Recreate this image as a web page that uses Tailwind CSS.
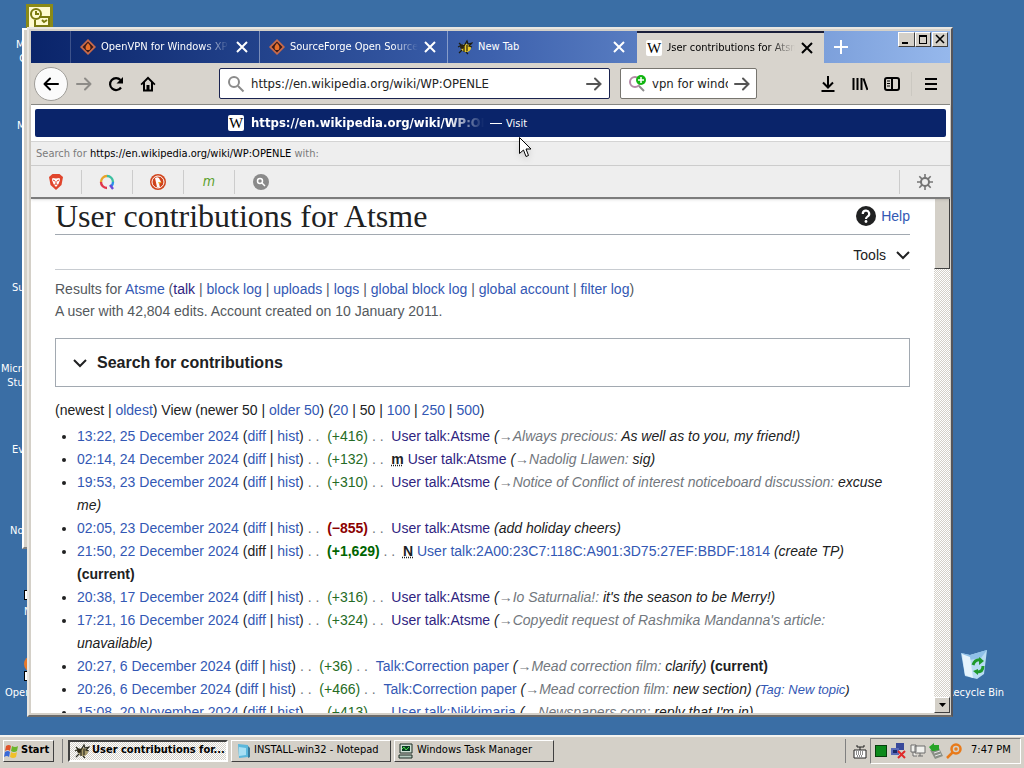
<!DOCTYPE html>
<html lang="en">
<head>
  <meta charset="UTF-8">
  <meta name="viewport" content="width=device-width, initial-scale=1.0">
  <title>User contributions for Atsme</title>
  <script src="https://cdn.jsdelivr.net/npm/@tailwindcss/browser@4"></script>
</head>
<body class="h-screen flex flex-col overflow-hidden bg-[#3a6ea5] font-['DejaVu_Sans_Condensed','DejaVu_Sans',sans-serif] text-[11px] text-black">

  <!-- Desktop -->
  <main class="relative flex-1 min-h-0 overflow-hidden">

    <!-- Desktop icons -->
    <svg class="absolute left-[26px] top-[4px] w-[27px] h-[27px]" viewBox="0 0 27 27" fill="none" stroke="#7a7a10" stroke-width="2">
      <rect x="1" y="1" width="25" height="25" fill="#fffbd0" stroke="#8a8a18" stroke-width="4"/>
      <circle cx="10" cy="10" r="5"/><path d="M10 7v3h3M13 13h10v9H9v-6M16 16l2 2 3-2"/>
    </svg>
    <div class="absolute left-4 top-[38px] leading-[14px] text-white">My<br>&nbsp;Co</div>
    <div class="absolute left-[17px] top-[119px] leading-[14px] text-white">My</div>
    <div class="absolute left-3 top-[281px] leading-[14px] text-white">Sup</div>
    <div class="absolute left-px top-[362px] leading-[14px] text-white">Micros<br>&nbsp;&nbsp;Studio</div>
    <div class="absolute left-3 top-[443px] leading-[14px] text-white">Eve</div>
    <div class="absolute left-[10px] top-[524px] leading-[14px] text-white">Note</div>
    <div class="absolute left-6 top-[590px] w-3 h-[10px] bg-white border border-black"></div>
    <div class="absolute left-6 top-[605px] leading-[14px] text-white">N</div>
    <div class="absolute left-6 top-[656px] w-4 h-4 rounded-full bg-[#e8792a]"></div>
    <div class="absolute left-6 top-[671px] w-3 h-[10px] bg-white border border-black"></div>
    <div class="absolute left-[5px] top-[686px] leading-[14px] text-white">OpenVPN</div>
    <svg class="absolute left-[960px] top-[649px] w-[28px] h-[32px]" viewBox="0 0 28 32">
      <path d="M1 4l9 2 17-5-3 24-7 5-12-3z" fill="#b9dcf3"/>
      <path d="M1 4l9 2 17-5-6 8-12 2z" fill="#8fc0e8"/>
      <path d="M2 5l8 3 3 21-8-3z" fill="#e6f4fc"/>
      <path d="M21 11q-6-1-8 5M23 17q0 6-6 6" fill="none" stroke="#1f9a2c" stroke-width="3"/>
      <path d="M19 8l5 4-5 4zM18 20v6l-5-4z" fill="#1f9a2c"/>
    </svg>
    <div class="absolute left-[947px] top-[686px] leading-[14px] text-white whitespace-nowrap">Recycle Bin</div>

    <!-- Window behind -->
    <div class="absolute left-[22px] top-[28px] w-40 h-[521px] bg-[#d4d0c8] border-2 border-white border-r-[#404040] border-b-[#808080]"></div>

    <!-- Browser window -->
    <section class="absolute left-[27px] top-[27px] right-[71px] bottom-[18px] flex flex-col p-[2px] pr-px bg-[#d4d0c8] border-2 border-[#e9e7e2] border-r-[#55555a] border-b-[#6b6b6b]">

      <!-- Tab strip -->
      <header class="flex shrink-0 h-8 bg-linear-to-r from-[#0a246a] via-[#3d61ad] to-[#96b8ec] text-white">
        <div class="w-10 border-r border-white/20"></div>
        <div class="flex items-center w-[189px] pl-[9px] pr-[11px] border-r border-white/40">
          <svg class="w-4 h-4 shrink-0" viewBox="0 0 16 16"><path d="M8 0l8 8-8 8-8-8z" fill="#c96a4a"/><path d="M8 2.500l5.500 5.500L8 13.500 2.500 8z" fill="#3a1a18"/><path d="M8 4q4 4 1.500 7h-3Q4 8 8 4z" fill="#e8702a"/></svg>
          <span class="ml-[5px] w-[128px] overflow-hidden whitespace-nowrap [mask-image:linear-gradient(to_right,#000_80%,transparent)]">OpenVPN for Windows XP</span>
          <button class="ml-auto" aria-label="Close tab"><svg class="w-3 h-3" viewBox="0 0 12 12" stroke="currentColor" stroke-width="2"><path d="M1 1l10 10M11 1L1 11"/></svg></button>
        </div>
        <div class="flex items-center w-[188px] pl-[9px] pr-[11px] border-r border-white/40">
          <svg class="w-4 h-4 shrink-0" viewBox="0 0 16 16"><path d="M8 0l8 8-8 8-8-8z" fill="#c96a4a"/><path d="M8 2.500l5.500 5.500L8 13.500 2.500 8z" fill="#3a1a18"/><path d="M8 4q4 4 1.500 7h-3Q4 8 8 4z" fill="#e8702a"/></svg>
          <span class="ml-[5px] w-[128px] overflow-hidden whitespace-nowrap [mask-image:linear-gradient(to_right,#000_80%,transparent)]">SourceForge Open Source</span>
          <button class="ml-auto" aria-label="Close tab"><svg class="w-3 h-3" viewBox="0 0 12 12" stroke="currentColor" stroke-width="2"><path d="M1 1l10 10M11 1L1 11"/></svg></button>
        </div>
        <div class="flex items-center w-[189px] pl-[9px] pr-[12px]">
          <svg class="w-4 h-4 shrink-0" viewBox="0 0 16 16"><ellipse cx="9" cy="9" rx="5" ry="4" fill="#e8c82a"/><path d="M1 8l4-2 2 1 3-5 1 3 4-1-3 3 3 1M7 6v7M10 6v6M5 11l-3 3M9 13l2 2M4 6L2 4" fill="none" stroke="#1c1c10" stroke-width="1.200"/><circle cx="5" cy="8" r="2" fill="#2a2410"/></svg>
          <span class="ml-[5px] w-[128px] overflow-hidden whitespace-nowrap">New Tab</span>
          <button class="ml-auto" aria-label="Close tab"><svg class="w-3 h-3" viewBox="0 0 12 12" stroke="currentColor" stroke-width="2"><path d="M1 1l10 10M11 1L1 11"/></svg></button>
        </div>
        <div class="flex items-center w-[187px] pl-[9px] pr-[11px] border-t-2 border-[#1a1f3a] bg-[#d8d4cd] text-black">
          <span class="w-4 h-4 shrink-0 rounded-xs bg-white text-center font-['Liberation_Serif',serif] text-[15px] leading-4">W</span>
          <span class="ml-[5px] w-[128px] overflow-hidden whitespace-nowrap [mask-image:linear-gradient(to_right,#000_80%,transparent)]"><span class="-ml-[3px]">User contributions for Atsme</span></span>
          <button class="ml-auto" aria-label="Close tab"><svg class="w-3 h-3" viewBox="0 0 12 12" stroke="currentColor" stroke-width="2"><path d="M1 1l10 10M11 1L1 11"/></svg></button>
        </div>
        <button class="w-[34px] flex items-center justify-center" aria-label="New tab"><svg class="w-[14px] h-[14px]" viewBox="0 0 14 14" stroke="currentColor" stroke-width="2"><path d="M7 0v14M0 7h14"/></svg></button>
        <div class="ml-auto mr-[2px] mt-px flex text-black">
          <button class="w-[17px] h-[15px] bg-[#d4d0c8] border border-white border-r-[#404040] border-b-[#404040]" aria-label="Minimize"><svg class="w-full h-full" viewBox="0 0 15 13"><path d="M3 9h6v2H3z"/></svg></button>
          <button class="w-4 h-[15px] bg-[#d4d0c8] border border-white border-r-[#404040] border-b-[#404040]" aria-label="Maximize"><svg class="w-full h-full" viewBox="0 0 14 13"><path d="M3 2h8v9H3z M4 4v6h6V4z" fill-rule="evenodd"/></svg></button>
          <button class="ml-px w-4 h-[15px] bg-[#d4d0c8] border border-white border-r-[#404040] border-b-[#404040]" aria-label="Close"><svg class="w-full h-full" viewBox="0 0 14 13" stroke="#000" stroke-width="1.600"><path d="M3 2l8 8M11 2l-8 8"/></svg></button>
        </div>
      </header>

      <!-- Toolbar -->
      <div class="flex shrink-0 items-center h-[42px] pl-[3px] pr-[3px] bg-[#d8d4cd] border-b border-[#8a8a86]">
        <button class="w-[34px] h-[34px] flex items-center justify-center rounded-full bg-[#fbfbfb] border border-[#a09e99]" aria-label="Back"><svg class="w-4 h-4" viewBox="0 0 16 16" fill="none" stroke="#000" stroke-width="2" stroke-linecap="round" stroke-linejoin="round"><path d="M15 8H1.500M7 2.500L1.500 8 7 13.500"/></svg></button>
        <button class="w-8 flex justify-center" aria-label="Forward"><svg class="w-4 h-4" viewBox="0 0 16 16" fill="none" stroke="#8d8b87" stroke-width="2" stroke-linecap="round" stroke-linejoin="round"><path d="M1 8h13.500M9 2.500L14.500 8 9 13.500"/></svg></button>
        <button class="w-8 flex justify-center" aria-label="Reload"><svg class="w-4 h-4" viewBox="0 0 16 16" fill="none" stroke="#000" stroke-width="2.200"><path d="M13 11.500A6 6 0 1 1 12.500 4"/><path d="M15 1v6.500H8.500z" fill="#000" stroke="none"/></svg></button>
        <button class="w-8 flex justify-center" aria-label="Home"><svg class="w-4 h-4" viewBox="0 0 16 16"><path d="M8 .5L.5 8l1.200 1.200L3 8v7.500h10V8l1.300 1.200L15.500 8zM5 6.300l3-3 3 3v7.200H9.500V9h-3v4.500H5z" fill-rule="evenodd"/></svg></button>
        <form class="ml-[55px] flex-1 min-w-0 h-[31px] flex items-center px-[7px] bg-white border border-[#1a2350] rounded-xs">
          <svg class="w-[18px] h-[18px] shrink-0" viewBox="0 0 18 18" fill="none" stroke="#8b8b8b" stroke-width="2"><circle cx="7" cy="7" r="5"/><path d="M11 11l5.500 5.500"/></svg>
          <input class="ml-[6px] flex-1 min-w-0 text-[13px] text-[#222] outline-none" aria-label="Address" value="https://en.wikipedia.org/wiki/WP:OPENLE">
          <button type="button" aria-label="Go"><svg class="w-4 h-4" viewBox="0 0 16 16" fill="none" stroke="#555" stroke-width="2" stroke-linecap="round"><path d="M1 8h13.500M9 2.500L14.500 8 9 13.500"/></svg></button>
        </form>
        <form class="ml-[10px] w-[137px] h-[31px] flex items-center pl-[8px] pr-[6px] bg-white border border-[#77756f] rounded-xs">
          <svg class="w-[17px] h-[17px] shrink-0" viewBox="0 0 17 17" fill="none"><circle cx="6" cy="7" r="5" stroke="#b58aa8" stroke-width="2"/><path d="M10 11l5 5" stroke="#8b8b8b" stroke-width="2"/><circle cx="12" cy="5" r="5" fill="#12b512"/><path d="M12 2v6M9 5h6" stroke="#fff" stroke-width="1.500"/></svg>
          <input class="ml-[6px] flex-1 min-w-0 text-[13px] text-[#222] outline-none" aria-label="Search" value="vpn for windows xp">
          <button type="button" class="ml-[6px]" aria-label="Search"><svg class="w-4 h-4" viewBox="0 0 16 16" fill="none" stroke="#555" stroke-width="2" stroke-linecap="round"><path d="M1 8h13.500M9 2.500L14.500 8 9 13.500"/></svg></button>
        </form>
        <button class="ml-[55px] w-8 flex justify-center" aria-label="Downloads"><svg class="w-4 h-4" viewBox="0 0 16 16" fill="none" stroke="#000" stroke-width="2"><path d="M8 0v11M3 6.500L8 11.500l5-5M1.500 15h13"/></svg></button>
        <button class="w-8 flex justify-center" aria-label="Library"><svg class="w-4 h-4" viewBox="0 0 16 16" fill="none" stroke="#000" stroke-width="2"><path d="M1.500 2v12M5.500 2v12M9.500 2v12M11.500 2.500l4 11.500"/></svg></button>
        <button class="w-8 flex justify-center" aria-label="Sidebars"><svg class="w-4 h-4" viewBox="0 0 16 16" fill="none" stroke="#000" stroke-width="2"><rect x="1" y="2" width="14" height="12" rx="2"/><path d="M8 2v12"/><path d="M3 5h3M3 7.500h3M3 10h3" stroke-width="1"/></svg></button>
        <div class="ml-[3px] mr-[3px] w-px h-6 bg-[#cbc8c1]"></div>
        <button class="w-8 flex justify-center" aria-label="Menu"><svg class="w-3 h-3" viewBox="0 0 12 12" stroke="#000" stroke-width="2"><path d="M0 1h12M0 6h12M0 11h12"/></svg></button>
      </div>

      <div class="relative flex flex-1 min-h-0 bg-white">

        <!-- Page -->
        <article class="flex-1 min-w-0 overflow-hidden px-6 pt-[93px] font-['Liberation_Sans',Arial,sans-serif] text-[14px] leading-[22px] text-[#202122]">
          <div class="flex items-center h-[37px] border-b border-[#a2a9b1]">
            <h1 class="font-['Liberation_Serif',serif] text-[32px] leading-9 whitespace-nowrap">User contributions for Atsme</h1>
            <a href="#" class="ml-auto flex items-center text-[#3358b4]">
              <svg class="mr-[5px] w-5 h-5" viewBox="0 0 20 20"><circle cx="10" cy="10" r="10" fill="#202122"/><path d="M6.800 8a3.200 3.200 0 1 1 4.700 2.600Q10 11.400 10 13" fill="none" stroke="#fff" stroke-width="2.200"/><circle cx="10" cy="15.500" r="1.400" fill="#fff"/></svg>Help</a>
          </div>
          <div class="flex justify-end items-center h-[35px] pt-[6px] border-b border-[#c8ccd1]">
            <button class="flex items-center">Tools <svg class="ml-[10px] w-[14px] h-[10px]" viewBox="0 0 14 10" fill="none" stroke="#202122" stroke-width="2"><path d="M1 2l6 6 6-6"/></svg></button>
          </div>
          <p class="mt-2 text-[#54595d]">Results for <a href="#" class="text-[#3358b4]">Atsme</a> (<a href="#" class="text-[#2f2480]">talk</a> | <a href="#" class="text-[#3358b4]">block log</a> | <a href="#" class="text-[#3358b4]">uploads</a> | <a href="#" class="text-[#3358b4]">logs</a> | <a href="#" class="text-[#3358b4]">global block log</a> | <a href="#" class="text-[#3358b4]">global account</a> | <a href="#" class="text-[#3358b4]">filter log</a>)<br>A user with 42,804 edits. Account created on 10 January 2011.</p>
          <button class="mt-4 w-full h-[49px] flex items-center pl-[17px] border border-[#a2a9b1] text-[16px] font-bold">
            <svg class="mr-[10px] w-[14px] h-[10px]" viewBox="0 0 14 10" fill="none" stroke="#202122" stroke-width="2"><path d="M1 2l6 6 6-6"/></svg>Search for contributions</button>
          <p class="mt-3">(newest | <a href="#" class="text-[#3358b4]">oldest</a>) View (newer 50 | <a href="#" class="text-[#3358b4]">older 50</a>) (<a href="#" class="text-[#3358b4]">20</a> | 50 | <a href="#" class="text-[#3358b4]">100</a> | <a href="#" class="text-[#3358b4]">250</a> | <a href="#" class="text-[#3358b4]">500</a>)</p>
          <ul class="mt-1 pl-[22px] list-disc leading-[23px]">
            <li><a href="#" class="text-[#3358b4]">13:22, 25 December 2024</a> (<a href="#" class="text-[#3358b4]">diff</a> | <a href="#" class="text-[#3358b4]">hist</a>) <span class="text-[#72777d]">. .</span>&nbsp; <span class="text-[#256b25]">(+416)</span> <span class="text-[#72777d]">. .</span> &nbsp;<a href="#" class="text-[#2f2480]">User talk:Atsme</a> <i>(<span class="text-[#72777d]">→Always precious: </span>As well as to you, my friend!)</i></li>
            <li><a href="#" class="text-[#3358b4]">02:14, 24 December 2024</a> (<a href="#" class="text-[#3358b4]">diff</a> | <a href="#" class="text-[#3358b4]">hist</a>) <span class="text-[#72777d]">. .</span>&nbsp; <span class="text-[#256b25]">(+132)</span> <span class="text-[#72777d]">. .</span> &nbsp;<abbr class="font-bold underline decoration-dotted">m</abbr> <a href="#" class="text-[#2f2480]">User talk:Atsme</a> <i>(<span class="text-[#72777d]">→Nadolig Llawen: </span>sig)</i></li>
            <li><a href="#" class="text-[#3358b4]">19:53, 23 December 2024</a> (<a href="#" class="text-[#3358b4]">diff</a> | <a href="#" class="text-[#3358b4]">hist</a>) <span class="text-[#72777d]">. .</span>&nbsp; <span class="text-[#256b25]">(+310)</span> <span class="text-[#72777d]">. .</span> &nbsp;<a href="#" class="text-[#2f2480]">User talk:Atsme</a> <i>(<span class="text-[#72777d]">→Notice of Conflict of interest noticeboard discussion: </span>excuse<br>me)</i></li>
            <li><a href="#" class="text-[#3358b4]">02:05, 23 December 2024</a> (<a href="#" class="text-[#3358b4]">diff</a> | <a href="#" class="text-[#3358b4]">hist</a>) <span class="text-[#72777d]">. .</span>&nbsp; <b class="text-[#8b0000]">(−855)</b> <span class="text-[#72777d]">. .</span> &nbsp;<a href="#" class="text-[#2f2480]">User talk:Atsme</a> <i>(add holiday cheers)</i></li>
            <li><a href="#" class="text-[#3358b4]">21:50, 22 December 2024</a> (diff | <a href="#" class="text-[#3358b4]">hist</a>) <span class="text-[#72777d]">. .</span>&nbsp; <b class="text-[#006400]">(+1,629)</b> <span class="text-[#72777d]">. .</span> &nbsp;<abbr class="font-bold underline decoration-dotted">N</abbr> <a href="#" class="text-[#3358b4]">User talk:2A00:23C7:118C:A901:3D75:27EF:BBDF:1814</a> <i>(create TP)</i><br><b>(current)</b></li>
            <li><a href="#" class="text-[#3358b4]">20:38, 17 December 2024</a> (<a href="#" class="text-[#3358b4]">diff</a> | <a href="#" class="text-[#3358b4]">hist</a>) <span class="text-[#72777d]">. .</span>&nbsp; <span class="text-[#256b25]">(+316)</span> <span class="text-[#72777d]">. .</span> &nbsp;<a href="#" class="text-[#2f2480]">User talk:Atsme</a> <i>(<span class="text-[#72777d]">→Io Saturnalia!: </span>it's the season to be Merry!)</i></li>
            <li><a href="#" class="text-[#3358b4]">17:21, 16 December 2024</a> (<a href="#" class="text-[#3358b4]">diff</a> | <a href="#" class="text-[#3358b4]">hist</a>) <span class="text-[#72777d]">. .</span>&nbsp; <span class="text-[#256b25]">(+324)</span> <span class="text-[#72777d]">. .</span> &nbsp;<a href="#" class="text-[#2f2480]">User talk:Atsme</a> <i>(<span class="text-[#72777d]">→Copyedit request of Rashmika Mandanna's article:</span><br>unavailable)</i></li>
            <li><a href="#" class="text-[#3358b4]">20:27, 6 December 2024</a> (<a href="#" class="text-[#3358b4]">diff</a> | <a href="#" class="text-[#3358b4]">hist</a>) <span class="text-[#72777d]">. .</span>&nbsp; <span class="text-[#256b25]">(+36)</span> <span class="text-[#72777d]">. .</span> &nbsp;<a href="#" class="text-[#3358b4]">Talk:Correction paper</a> <i>(<span class="text-[#72777d]">→Mead correction film: </span>clarify)</i> <b>(current)</b></li>
            <li><a href="#" class="text-[#3358b4]">20:26, 6 December 2024</a> (<a href="#" class="text-[#3358b4]">diff</a> | <a href="#" class="text-[#3358b4]">hist</a>) <span class="text-[#72777d]">. .</span>&nbsp; <span class="text-[#256b25]">(+466)</span> <span class="text-[#72777d]">. .</span> &nbsp;<a href="#" class="text-[#3358b4]">Talk:Correction paper</a> <i>(<span class="text-[#72777d]">→Mead correction film: </span>new section)</i> <i class="text-[13px]">(<a href="#" class="text-[#3358b4]">Tag: New topic</a>)</i></li>
            <li><a href="#" class="text-[#3358b4]">15:08, 20 November 2024</a> (<a href="#" class="text-[#3358b4]">diff</a> | <a href="#" class="text-[#3358b4]">hist</a>) <span class="text-[#72777d]">. .</span>&nbsp; <span class="text-[#256b25]">(+413)</span> <span class="text-[#72777d]">. .</span> &nbsp;<a href="#" class="text-[#3358b4]">User talk:Nikkimaria</a> <i>(<span class="text-[#72777d]">→Newspapers.com: </span>reply that I'm in)</i></li>
          </ul>
        </article>

        <!-- Scrollbar -->
        <div class="w-4 shrink-0 flex flex-col justify-between bg-[repeating-conic-gradient(#fff_0_25%,#d4d0c8_0_50%)] bg-size-[2px_2px]">
          <div class="h-[164px] bg-[#d4d0c8] border border-white border-r-[#404040] border-b-[#404040]"></div>
          <button class="h-4 flex items-center justify-center bg-[#d4d0c8] border border-white border-r-[#404040] border-b-[#404040]" aria-label="Scroll down"><svg class="w-[7px] h-1" viewBox="0 0 7 4"><path d="M0 0h7L3.500 4z"/></svg></button>
        </div>

        <!-- Address suggestions -->
        <div class="absolute inset-x-0 top-0 bg-white border-b-2 border-[#7c7c7c] shadow-sm">
          <div class="p-1">
            <a href="#" class="flex items-center h-7 pl-[193px] bg-[#0a246a] rounded-xs text-white">
              <span class="w-4 h-4 rounded-xs bg-white text-center text-black font-['Liberation_Serif',serif] text-[15px] leading-4">W</span>
              <span class="ml-[7px] w-[233px] overflow-hidden whitespace-nowrap text-[13px] font-bold [mask-image:linear-gradient(to_right,#000_85%,transparent)]">https://en.wikipedia.org/wiki/WP:OPENLE</span>
              <span class="ml-[6px] w-3 h-px bg-white"></span>
              <span class="ml-1 pt-[3px]">Visit</span>
            </a>
          </div>
          <div class="flex items-center h-6 px-[5px] pt-[2px] bg-[#eee] border-t border-[#d4d4d4] text-[#7b7b7b]"><p>Search for <span class="text-black">https://en.wikipedia.org/wiki/WP:OPENLE</span> with:</p></div>
          <div class="flex items-center h-8 bg-[#eee] border-t border-[#ccc]">
            <button class="w-[51px] h-6 flex items-center justify-center border-r border-[#ccc]" aria-label="Brave"><svg class="w-4 h-4" viewBox="0 0 16 16"><path d="M4.500 0h7L15 3l-1.500 8L8 16l-5.500-5L1 3z" fill="#e0452c"/><path d="M4.500 4l3.500.5 3.500-.5.5 2-1.500 4L8 13l-2.500-3L4 6z" fill="#fff"/><path d="M5 6l2 1M11 6L9 7M8 7v3M6.500 10.500L8 10l1.500.5" stroke="#e0452c" fill="none"/></svg></button>
            <button class="w-[51px] h-6 flex items-center justify-center border-r border-[#ccc]" aria-label="Qwant"><svg class="w-4 h-4" viewBox="0 0 16 16" fill="none" stroke-width="2.400"><path d="M2 8a6 6 0 0 1 6-6" stroke="#e8a32a"/><path d="M8 2a6 6 0 0 1 6 6" stroke="#3cc0a0"/><path d="M14 8a6 6 0 0 1-2 4.500" stroke="#2a8fe8"/><path d="M2 8a6 6 0 0 0 6 6" stroke="#e0364a"/><path d="M11 11l3 4" stroke="#6a4ad8"/></svg></button>
            <button class="w-[51px] h-6 flex items-center justify-center border-r border-[#ccc]" aria-label="DuckDuckGo"><svg class="w-4 h-4" viewBox="0 0 16 16"><circle cx="8" cy="8" r="8" fill="#d0441c"/><circle cx="8" cy="8" r="6" fill="none" stroke="#fff"/><path d="M5 4q4-2 5 2l1 2-2 1 1 5-3-1z" fill="#fff"/><path d="M8 8l4 0-3 2z" fill="#f5b52a"/></svg></button>
            <button class="w-[51px] h-6 flex items-center justify-center border-r border-[#ccc] text-[14px] italic text-[#5aa02c]" aria-label="Mojeek">m</button>
            <button class="w-[51px] h-6 flex items-center justify-center" aria-label="Search engine"><svg class="w-4 h-4" viewBox="0 0 16 16" fill="none" stroke="#fff" stroke-width="1.500"><circle cx="8" cy="8" r="8" fill="#8a8a8a" stroke="none"/><circle cx="7" cy="7" r="2.500"/><path d="M9 9l3 3"/></svg></button>
            <button class="ml-auto w-[51px] h-6 flex items-center justify-center border-l border-[#ccc]" aria-label="Change search settings"><svg class="w-4 h-4" viewBox="0 0 16 16" fill="none" stroke="#757575" stroke-width="2"><circle cx="8" cy="8" r="4"/><path d="M8 0v4M8 12v4M0 8h4M12 8h4M2.300 2.300l2.800 2.800M10.900 10.900l2.800 2.800M13.700 2.300l-2.800 2.800M5.100 10.900l-2.800 2.800" stroke-width="1.600"/></svg></button>
          </div>
        </div>
      </div>
    </section>

    <!-- Mouse pointer -->
    <svg class="absolute left-[519px] top-[137px] w-[13px] h-[21px] drop-shadow-md" viewBox="0 0 13 21"><path d="M.5 .5v16l4-3.500 2.500 6.500 2.500-1L7 12h5z" fill="#fff" stroke="#000"/></svg>
  </main>

  <!-- Taskbar -->
  <footer class="flex shrink-0 items-center h-[33px] px-[3px] pb-1 bg-[#d4d0c8] border-t-2 border-[#f4f3f0]">
    <button class="flex items-center w-[51px] h-[22px] bg-[#d4d0c8] border border-white border-r-[#404040] border-b-[#404040] font-bold">
      <svg class="mr-px w-4 h-4" viewBox="0 0 16 16"><path d="M2 3q3-2 5 0L6 8Q4 6 1 8z" fill="#e0522a"/><path d="M8 3q3 2 6 0l-1 5q-3 2-6 0z" fill="#6ab52a"/><path d="M1 9q3-2 5 0l-1 5q-2-2-5 0z" fill="#3a6ad8"/><path d="M7 9q3 2 6 0l-1 5q-3 2-6 0z" fill="#f0c02a"/></svg>Start</button>
    <div class="ml-2 mr-[5px] w-px h-6 bg-[#808080]"></div>
    <button class="flex items-center w-[160px] h-[22px] pl-1 bg-[repeating-conic-gradient(#fff_0_25%,#d4d0c8_0_50%)] bg-size-[2px_2px] border-2 border-[#404040] border-r-white border-b-white font-bold whitespace-nowrap">
      <svg class="mr-[2px] w-4 h-4 shrink-0" viewBox="0 0 16 16"><ellipse cx="9" cy="9" rx="5" ry="4" fill="#a89a6a"/><path d="M1 8l4-2 2 1 3-5 1 3 4-1-3 3 3 1M7 6v7M10 6v6M5 11l-3 3M9 13l2 2M4 6L2 4" fill="none" stroke="#2c2c20" stroke-width="1.200"/><circle cx="5" cy="8" r="2" fill="#2a2410"/></svg>User contributions for...</button>
    <button class="ml-[3px] flex items-center w-[160px] h-[22px] pl-[3px] border border-white border-r-[#404040] border-b-[#404040] whitespace-nowrap">
      <svg class="mr-[3px] w-4 h-4 shrink-0" viewBox="0 0 16 16"><path d="M3 1l10 1v12l-9 1z" fill="#5cb8dc"/><path d="M4 4l7 1v7l-7 1z" fill="#a8e0f4"/><path d="M13 3l2 2v9l-2 1z" fill="#3a7a9a"/></svg>INSTALL-win32 - Notepad</button>
    <button class="ml-[3px] flex items-center w-[160px] h-[22px] pl-[3px] border border-white border-r-[#404040] border-b-[#404040] whitespace-nowrap">
      <svg class="mr-[3px] w-4 h-4 shrink-0" viewBox="0 0 16 16"><path d="M2 1h12v9H2z" fill="#cfe0d4" stroke="#1c2c24"/><path d="M4 3h8v5H4z" fill="#0a3a24"/><path d="M4 6l2-2 2 3 3-3" stroke="#4ae04a" fill="none"/><path d="M1 12h13v3H1z" fill="#b8ccc0" stroke="#1c2c24"/></svg>Windows Task Manager</button>
    <div class="ml-auto w-px h-6 bg-[#808080]"></div>
    <svg class="ml-[7px] w-[14px] h-4" viewBox="0 0 14 16"><path d="M1 7h12v8H1z" fill="#fff" stroke="#222"/><path d="M3 9h8M3 11h8M4 13h6" stroke="#222" stroke-dasharray="1 1"/><path d="M7 7V4H4V2M7 4h4V2" fill="none" stroke="#222"/></svg>
    <div class="ml-[3px] flex items-center h-[26px] w-[151px] pl-1 border border-[#808080] border-r-white border-b-white">
      <svg class="w-3 h-3" viewBox="0 0 12 12"><path d="M0 0h12v12H0z" fill="#06400c"/><path d="M1 1h10v10H1z" fill="#0c8a1c"/></svg>
      <svg class="ml-1 w-4 h-4" viewBox="0 0 16 16"><path d="M5 0h8v7H5z" fill="#3a4a9a"/><path d="M0 5h8v7H0z" fill="#5a6ab8"/><path d="M2 7h4v3H2z" fill="#1a2a6a"/><path d="M7 8l7 7M14 8l-7 7" stroke="#e02a2a" stroke-width="2"/></svg>
      <svg class="ml-[3px] w-4 h-4" viewBox="0 0 16 16" fill="#f0f0ec" stroke="#6c6c6c"><path d="M1 2h5v7H1zM5 3h10v7H5zM8 13h5M10 10v3M3 9v4h4"/></svg>
      <svg class="ml-[2px] w-4 h-4" viewBox="0 0 16 16"><path d="M2 7l9-2 4 8-8 3z" fill="#8a9088"/><path d="M6 10l6-2M7 13l6-2" stroke="#e4e4e4"/><path d="M1 4L6 0v2l5 0v5L6 8l-2 0z" fill="#28a428"/></svg>
      <svg class="ml-[2px] w-4 h-4" viewBox="0 0 16 16" fill="none" stroke="#e87a1a" stroke-width="2.500"><circle cx="10" cy="6" r="4.500"/><path d="M7 9l-6 6"/><circle cx="10" cy="6" r="1" stroke-width="1.500"/></svg>
      <span class="ml-[9px] whitespace-nowrap">7:47 PM</span>
    </div>
  </footer>
</body>
</html>
